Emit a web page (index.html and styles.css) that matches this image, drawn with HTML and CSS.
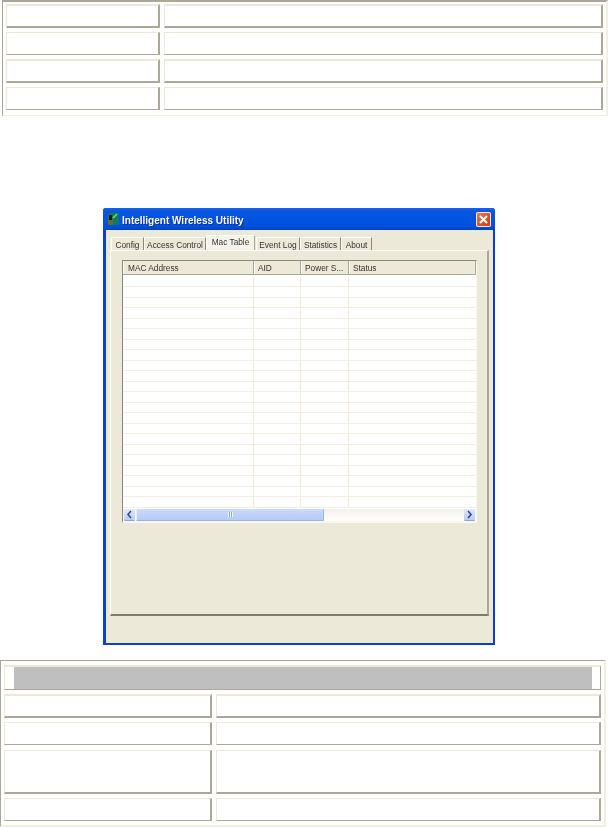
FILE: index.html
```html
<!DOCTYPE html>
<html lang="en">
<head>
    <meta charset="UTF-8">
    <title>Intelligent Wireless Utility - Mac Table</title>
    <link rel="stylesheet" href="styles.css">
</head>
<body>
    <!-- Top table -->
    <div class="doc-table top-table">
        <div class="row"><div class="cell heavy"></div><div class="cell heavy"></div></div>
        <div class="row"><div class="cell light"></div><div class="cell light"></div></div>
        <div class="row"><div class="cell heavy"></div><div class="cell heavy"></div></div>
        <div class="row"><div class="cell light"></div><div class="cell light"></div></div>
    </div>

    <!-- Utility window -->
    <div class="window">
        <div class="titlebar">
            <svg class="app-icon" width="11" height="12" viewBox="0 0 11 12">
                <rect width="11" height="12" fill="#0f7a68"/>
                <rect x="0" y="6" width="5" height="6" fill="#6b6a1e"/>
                <rect x="1" y="2" width="3" height="5" fill="#0c1a1a"/>
                <path d="M5 5 L9 1" stroke="#8fe04a" stroke-width="1.5"/>
            </svg>
            <span class="title">Intelligent Wireless Utility</span>
            <div class="close-btn">
                <svg width="15" height="15" viewBox="0 0 15 15">
                    <path d="M4 4 L11 11 M11 4 L4 11" stroke="#fff" stroke-width="2"/>
                </svg>
            </div>
        </div>
        <div class="client">
            <div class="tabs">
                <div class="tab tab-config">Config</div>
                <div class="tab tab-access">Access Control</div>
                <div class="tab tab-mac active">Mac Table</div>
                <div class="tab tab-event">Event Log</div>
                <div class="tab tab-stats">Statistics</div>
                <div class="tab tab-about">About</div>
            </div>
            <div class="panel">
                <div class="listview">
                    <div class="lv-header">
                        <div class="lv-col">MAC Address</div>
                        <div class="lv-col">AID</div>
                        <div class="lv-col">Power S...</div>
                        <div class="lv-col">Status</div>
                    </div>
                    <div class="lv-body">
                        <div class="lv-row"><i></i><i></i><i></i></div>
                        <div class="lv-row"><i></i><i></i><i></i></div>
                        <div class="lv-row"><i></i><i></i><i></i></div>
                        <div class="lv-row"><i></i><i></i><i></i></div>
                        <div class="lv-row"><i></i><i></i><i></i></div>
                        <div class="lv-row"><i></i><i></i><i></i></div>
                        <div class="lv-row"><i></i><i></i><i></i></div>
                        <div class="lv-row"><i></i><i></i><i></i></div>
                        <div class="lv-row"><i></i><i></i><i></i></div>
                        <div class="lv-row"><i></i><i></i><i></i></div>
                        <div class="lv-row"><i></i><i></i><i></i></div>
                        <div class="lv-row"><i></i><i></i><i></i></div>
                        <div class="lv-row"><i></i><i></i><i></i></div>
                        <div class="lv-row"><i></i><i></i><i></i></div>
                        <div class="lv-row"><i></i><i></i><i></i></div>
                        <div class="lv-row"><i></i><i></i><i></i></div>
                        <div class="lv-row"><i></i><i></i><i></i></div>
                        <div class="lv-row"><i></i><i></i><i></i></div>
                        <div class="lv-row"><i></i><i></i><i></i></div>
                        <div class="lv-row"><i></i><i></i><i></i></div>
                        <div class="lv-row"><i></i><i></i><i></i></div>
                        <div class="lv-row"><i></i><i></i><i></i></div>
                    </div>
                    <div class="scrollbar">
                        <div class="sb-btn">
                            <svg width="11" height="11" viewBox="0 0 11 11"><path d="M7 2 L4 5.5 L7 9" fill="none" stroke="#3b4a80" stroke-width="1.6"/></svg>
                        </div>
                        <div class="sb-thumb"><span class="grip"></span></div>
                        <div class="sb-track"></div>
                        <div class="sb-btn">
                            <svg width="11" height="11" viewBox="0 0 11 11"><path d="M4 2 L7 5.5 L4 9" fill="none" stroke="#3b4a80" stroke-width="1.6"/></svg>
                        </div>
                    </div>
                </div>
            </div>
        </div>
    </div>

    <!-- Bottom table -->
    <div class="doc-table bottom-table">
        <div class="head-cell"><div class="head-fill"></div></div>
        <div class="row"><div class="cell heavy"></div><div class="cell heavy"></div></div>
        <div class="row row-extra"><div class="cell light"></div><div class="cell light"></div></div>
        <div class="row row-tall"><div class="cell tall"></div><div class="cell tall"></div></div>
        <div class="row"><div class="cell light"></div><div class="cell light"></div></div>
    </div>
</body>
</html>
```

FILE: styles.css
```css
body {
    margin: 0;
    background: #fff;
    font-family: "Liberation Sans", Arial, sans-serif;
    color: #333;
}

/* document tables */
.doc-table {
    display: flex;
    flex-direction: column;
    gap: 4px;
    box-sizing: border-box;
    background: #fff;
    border-style: solid;
    border-color: #aca899 #f1efe2 #f1efe2 #aca899;
}
.row {
    display: grid;
    column-gap: 4px;
    height: 24px;
}
.cell {
    box-sizing: border-box;
    background: #fff;
    border-style: solid;
    border-color: #ece9d8 #aca899 #aca899 #ece9d8;
}
.cell.heavy {
    border-width: 2px 2px 2px 1px;
}
.cell.light {
    border-width: 1px 1px 1px 1px;
    border-right-width: 2px;
}
.cell.tall {
    border-width: 1px 2px 2px 1px;
}

.top-table {
    width: 606px;
    height: 116px;
    margin-left: 2px;
    padding: 2px 3px 0;
    border-width: 2px 2px 1px 1px;
}
.top-table .row {
    grid-template-columns: 154px 439px;
}
.top-table .row:nth-child(even) {
    height: 23px;
}

.bottom-table {
    width: 606px;
    height: 167px;
    margin-top: 15px;
    padding: 4px 3px 0;
    border-width: 1px 2px 2px 1px;
}
.bottom-table .row {
    grid-template-columns: 208px 385px;
}
.bottom-table .row-extra {
    height: 23px;
    margin-bottom: 1px;
}
.bottom-table .row-tall {
    height: 44px;
}
.bottom-table .row:last-child {
    height: 23px;
}
.head-cell {
    box-sizing: border-box;
    width: 597px;
    height: 25px;
    padding: 0 8px 0 9px;
    border-style: solid;
    border-width: 2px 1px 1px 1px;
    border-color: #ece9d8 #aca899 #aca899 #ece9d8;
}
.head-fill {
    height: 100%;
    background: #bfbfbf;
}

/* XP window */
.window {
    box-sizing: border-box;
    width: 392px;
    height: 437px;
    margin: 92px 0 0 103px;
    display: flex;
    flex-direction: column;
    background: #0a3fd0;
    border-radius: 3px 3px 0 0;
}
.titlebar {
    flex: none;
    height: 22px;
    display: flex;
    align-items: center;
    padding: 0 4px 0 5px;
    background: linear-gradient(#1a62e8 0, #0a56e0 15%, #0054e3 50%, #0250dc 85%, #0441b8 100%);
    border-radius: 3px 3px 0 0;
}
.app-icon {
    flex: none;
    margin-right: 3px;
}
.title {
    flex: 1;
    padding-top: 2px;
    font-size: 10px;
    font-weight: bold;
    color: #fff;
    text-shadow: 1px 1px 0 #0f2f90;
    filter: blur(0.3px);
}
.close-btn {
    flex: none;
    width: 15px;
    height: 15px;
    border-radius: 2px;
    background: linear-gradient(135deg, #e88a66, #d9552f 50%, #c8401c);
    box-shadow: 0 0 0 1px #e9e9e9 inset;
}
.client {
    flex: 1;
    margin: 0 2px 2px 3px;
    padding: 5px 4px 0 4px;
    display: flex;
    flex-direction: column;
    background: #ece9d8;
}

/* tabs */
.tabs {
    flex: none;
    display: flex;
    align-items: flex-end;
    height: 15px;
    padding-left: 1px;
    font-size: 8.3px;
    color: #333;
}
.tab {
    box-sizing: border-box;
    height: 13px;
    line-height: 14px;
    text-align: center;
    border-left: 1px solid #fff;
    border-top: 1px solid #fff;
    border-right: 1px solid #8b8876;
    white-space: nowrap;
    filter: blur(0.25px);
}
.tab.active {
    height: 15px;
    background: #f6f4ea;
    border-right-color: #aca899;
    line-height: 13px;
}
.tab-config { width: 33px; }
.tab-access { width: 62px; }
.tab-mac { width: 49px; margin-right: 1px; }
.tab-event { width: 44px; }
.tab-stats { width: 41px; }
.tab-about { width: 31px; }

.panel {
    box-sizing: border-box;
    width: 379px;
    height: 366px;
    padding: 9px 0 0 11px;
    background: #ece9d8;
    border-top: 1px solid #fff;
    border-left: 1px solid #fff;
    border-right: 2px solid #aca899;
    border-bottom: 2px solid #7f7c6c;
}

/* list view */
.listview {
    box-sizing: border-box;
    width: 355px;
    height: 263px;
    background: #fff;
    border-top: 1px solid #8b8876;
    border-left: 1px solid #8b8876;
    border-right: 1px solid #f8f7f2;
    border-bottom: 2px solid #f8f7f2;
    font-size: 8.3px;
    color: #333;
}
.lv-header {
    display: grid;
    grid-template-columns: 131px 47px 48px 1fr;
    height: 14px;
    background: #ece9d8;
    border-bottom: 1px solid #aca899;
    box-sizing: border-box;
}
.lv-col {
    box-sizing: border-box;
    padding-left: 3px;
    line-height: 14px;
    border-left: 1px solid #fff;
    border-right: 1px solid #aca899;
    white-space: nowrap;
    overflow: hidden;
    filter: blur(0.25px);
}
.lv-col:first-child {
    padding-left: 4px;
}
.lv-body {
    box-sizing: border-box;
    height: 233px;
    padding-top: 1.5px;
    overflow: hidden;
}
.lv-row {
    display: grid;
    grid-template-columns: 131px 47px 48px;
    box-sizing: border-box;
    height: 10.53px;
    border-bottom: 1px solid #f1efe2;
}
.lv-row i {
    border-right: 1px solid #f1ecd8;
}

/* scrollbar */
.scrollbar {
    display: flex;
    align-items: stretch;
    height: 12px;
    margin-top: 1px;
    padding: 0 1px;
    background: linear-gradient(#f3f1ec, #fefefb);
}
.sb-btn {
    flex: none;
    width: 11px;
    display: flex;
    align-items: center;
    justify-content: center;
    background: linear-gradient(#e1eafe, #b9ccf6);
    border-bottom: 1px solid #8fa6dc;
    box-sizing: border-box;
    border-radius: 1px;
}
.sb-thumb {
    flex: none;
    width: 188px;
    margin-left: 1px;
    display: flex;
    align-items: center;
    justify-content: center;
    background: linear-gradient(#cbdafc, #b6caf8);
    border-left: 1px solid #e6edfd;
    border-right: 1px solid #9db4e6;
    border-bottom: 1px solid #9db4e6;
    box-sizing: border-box;
}
.grip {
    width: 5px;
    height: 5px;
    background: repeating-linear-gradient(90deg, #f2f6ff 0 1px, #8fa6dc 1px 2px);
}
.sb-track {
    flex: 1;
}
```
